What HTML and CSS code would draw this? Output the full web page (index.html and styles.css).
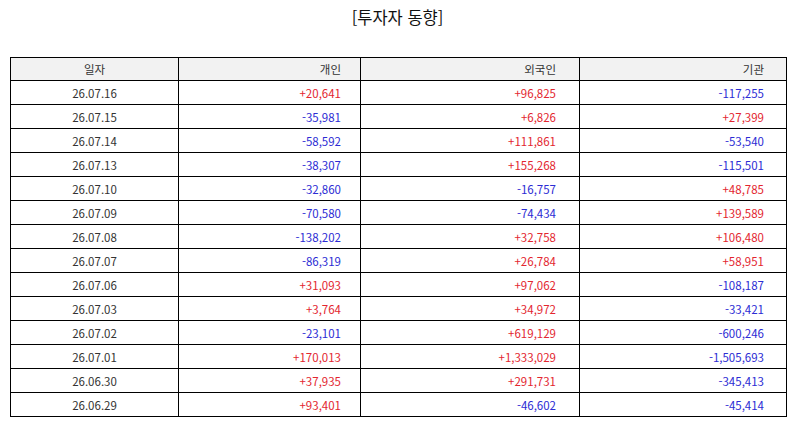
FILE: index.html
```html
<!DOCTYPE html>
<html lang="ko">
<head>
<meta charset="utf-8">
<link rel="stylesheet" href="styles.css">
</head>
<body>
<div class="page">
  <h1 class="title">[투자자 동향]</h1>
  <table class="grid">
    <colgroup>
      <col class="c1"><col class="c2"><col class="c3"><col class="c4">
    </colgroup>
    <thead>
      <tr><th class="date">일자</th><th class="n2">개인</th><th class="n3">외국인</th><th class="n4">기관</th></tr>
    </thead>
    <tbody>
      <tr><td class="date">26.07.16</td><td class="n2 up">+20,641</td><td class="n3 up">+96,825</td><td class="n4 dn">-117,255</td></tr>
      <tr><td class="date">26.07.15</td><td class="n2 dn">-35,981</td><td class="n3 up">+6,826</td><td class="n4 up">+27,399</td></tr>
      <tr><td class="date">26.07.14</td><td class="n2 dn">-58,592</td><td class="n3 up">+111,861</td><td class="n4 dn">-53,540</td></tr>
      <tr><td class="date">26.07.13</td><td class="n2 dn">-38,307</td><td class="n3 up">+155,268</td><td class="n4 dn">-115,501</td></tr>
      <tr><td class="date">26.07.10</td><td class="n2 dn">-32,860</td><td class="n3 dn">-16,757</td><td class="n4 up">+48,785</td></tr>
      <tr><td class="date">26.07.09</td><td class="n2 dn">-70,580</td><td class="n3 dn">-74,434</td><td class="n4 up">+139,589</td></tr>
      <tr><td class="date">26.07.08</td><td class="n2 dn">-138,202</td><td class="n3 up">+32,758</td><td class="n4 up">+106,480</td></tr>
      <tr><td class="date">26.07.07</td><td class="n2 dn">-86,319</td><td class="n3 up">+26,784</td><td class="n4 up">+58,951</td></tr>
      <tr><td class="date">26.07.06</td><td class="n2 up">+31,093</td><td class="n3 up">+97,062</td><td class="n4 dn">-108,187</td></tr>
      <tr><td class="date">26.07.03</td><td class="n2 up">+3,764</td><td class="n3 up">+34,972</td><td class="n4 dn">-33,421</td></tr>
      <tr><td class="date">26.07.02</td><td class="n2 dn">-23,101</td><td class="n3 up">+619,129</td><td class="n4 dn">-600,246</td></tr>
      <tr><td class="date">26.07.01</td><td class="n2 up">+170,013</td><td class="n3 up">+1,333,029</td><td class="n4 dn">-1,505,693</td></tr>
      <tr><td class="date">26.06.30</td><td class="n2 up">+37,935</td><td class="n3 up">+291,731</td><td class="n4 dn">-345,413</td></tr>
      <tr><td class="date">26.06.29</td><td class="n2 up">+93,401</td><td class="n3 dn">-46,602</td><td class="n4 dn">-45,414</td></tr>
    </tbody>
  </table>
</div>
</body>
</html>
```

FILE: styles.css
```css
html, body {
  margin: 0;
  padding: 0;
  background: #ffffff;
}

.page {
  width: 795px;
  font-family: "Noto Sans CJK KR", "Noto Sans", sans-serif;
  color: #333333;
}

.title {
  margin: 0;
  height: 57px;
  padding-top: 6px;
  box-sizing: border-box;
  text-align: center;
  font-size: 16.5px;
  font-weight: 400;
  line-height: 22px;
  color: #111111;
}

.grid {
  margin-left: 10px;
  width: 776px;
  border-collapse: collapse;
  table-layout: fixed;
  font-size: 11.5px;
}

.c1 { width: 168px; }
.c2 { width: 182px; }
.c3 { width: 219px; }
.c4 { width: 207px; }

.grid th,
.grid td {
  border: 1px solid #000000;
  height: 23px;
  padding: 0;
  font-weight: 400;
  line-height: 14px;
  white-space: nowrap;
}

.grid th {
  height: 22px;
  background: #f2f2f2;
  color: #333333;
}

.date { text-align: center; }
.n2 { text-align: right; padding-right: 19px !important; }
.n3 { text-align: right; padding-right: 23px !important; }
.n4 { text-align: right; padding-right: 22px !important; }

.up { color: #e3262f; }
.dn { color: #2c2cd4; }
```
